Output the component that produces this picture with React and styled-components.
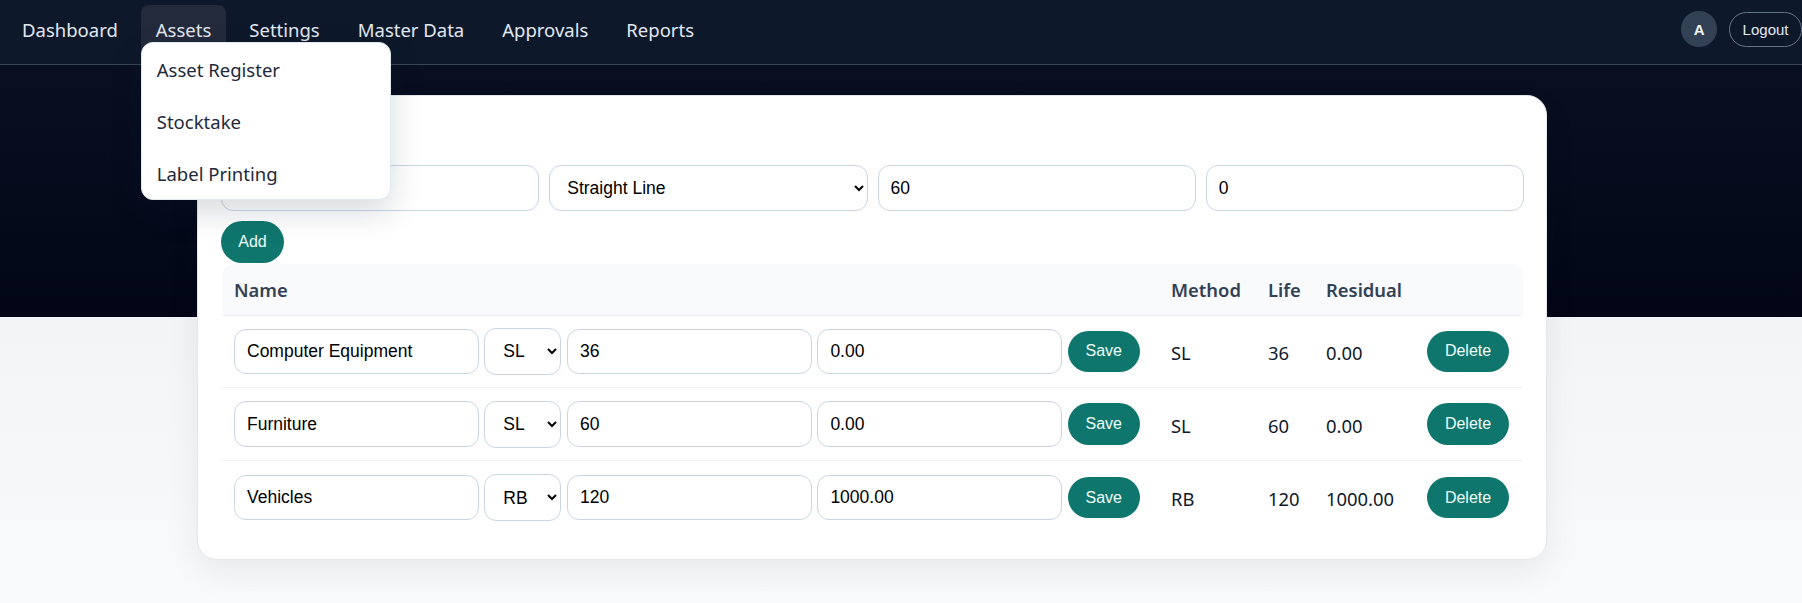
import React from "react";
import styled, { createGlobalStyle } from "styled-components";

const GlobalStyle = createGlobalStyle`
  html, body {
    margin: 0;
    padding: 0;
  }
  body {
    min-height: 603px;
    font-family: "Noto Sans", "Open Sans", sans-serif;
    color: #0f172a;
    background: linear-gradient(180deg, #0b1224 0, #020617 317px, #f3f4f6 317px, #f9fafb 603px) no-repeat;
  }
`;

const NavBar = styled.nav`
  display: flex;
  justify-content: space-between;
  align-items: flex-start;
  box-sizing: border-box;
  height: 65px;
  padding: 5px 0 0 7px;
  background: #0e182b;
  border-bottom: 1px solid #3b4558;
`;

const NavLinks = styled.div`
  display: flex;
  gap: 8px;
`;

const NavItem = styled.div`
  position: relative;
  height: 50px;
  padding: 0 15px;
  border-radius: 8px;
  font-size: 18.5px;
  line-height: 50px;
  color: #e2e8f0;
  background: ${(p) => (p.$active ? "#222a3c" : "transparent")};
`;

const Dropdown = styled.div`
  position: absolute;
  top: 37px;
  left: 0;
  z-index: 5;
  width: 250px;
  box-sizing: border-box;
  background: #fff;
  border: 1px solid #e2e8f0;
  border-radius: 12px;
  box-shadow: 0 12px 32px rgba(15, 23, 42, 0.16);
`;

const DropdownItem = styled.div`
  height: 52px;
  padding: 1px 15px 0;
  box-sizing: border-box;
  font-size: 18.5px;
  line-height: 52px;
  color: #1e293b;
`;

const UserBox = styled.div`
  display: flex;
  align-items: center;
  gap: 12px;
  padding-top: 6px;
`;

const Avatar = styled.div`
  display: flex;
  align-items: center;
  justify-content: center;
  width: 36px;
  height: 36px;
  border-radius: 50%;
  background: #334155;
  color: #f1f5f9;
  font: 700 15px "Liberation Sans", Arial, sans-serif;
`;

const LogoutButton = styled.button`
  height: 35px;
  padding: 0 12.5px;
  border: 1px solid #64748b;
  border-radius: 18px;
  background: transparent;
  color: #e2e8f0;
  font: 15px "Liberation Sans", Arial, sans-serif;
`;

const Main = styled.main`
  padding: 30px 0 0 197px;
`;

const Card = styled.section`
  box-sizing: border-box;
  width: 1350px;
  height: 465px;
  padding: 69px 22px 0 23px;
  background: #fff;
  border: 1px solid #e5e7eb;
  border-radius: 20px;
  box-shadow: 0 12px 32px rgba(15, 23, 42, 0.07);
`;

const AddForm = styled.div`
  display: grid;
  grid-template-columns: repeat(4, 1fr);
  gap: 10px;
`;

const fieldStyles = `
  box-sizing: border-box;
  background: #fff;
  border: 1px solid #cbd5e1;
  border-radius: 12px;
  color: #000;
  font: 17.5px "Liberation Sans", Arial, sans-serif;
  outline: none;
`;

const Field = styled.input`
  ${fieldStyles}
  width: ${(p) => (p.$full ? "100%" : "244.5px")};
  height: ${(p) => (p.$full ? "46px" : "45.6px")};
  padding: 0 12px;
`;

const Picker = styled.select`
  ${fieldStyles}
  width: ${(p) => (p.$full ? "100%" : "77px")};
  height: ${(p) => (p.$full ? "46px" : "46.8px")};
  padding: 0 ${(p) => (p.$full ? "13px" : "14px")};
`;

const ActionButton = styled.button`
  flex: none;
  height: 41.6px;
  padding: 0;
  width: ${(p) => p.$width}px;
  border: none;
  border-radius: 21px;
  background: #0f766e;
  color: #f0fdfa;
  font: 16px "Liberation Sans", Arial, sans-serif;
`;

const AddRow = styled.div`
  margin: 10px 0 1px;
`;

const Table = styled.table`
  width: 1301px;
  margin-left: 1px;
  border-collapse: separate;
  border-spacing: 0;
  table-layout: fixed;
`;

const HeadCell = styled.th`
  height: 52px;
  padding: 0 12px;
  box-sizing: border-box;
  background: #f8fafc;
  border-bottom: 1px solid #eef2f6;
  color: #334155;
  font-size: 18.4px;
  font-weight: 600;
  text-align: left;
  &:first-child {
    border-top-left-radius: 12px;
  }
  &:last-child {
    border-top-right-radius: 12px;
  }
`;

const Cell = styled.td`
  height: 72.8px;
  padding: 0 12px;
  box-sizing: border-box;
  border-bottom: ${(p) => (p.$last ? "none" : "1px solid #eef2f6")};
  font-size: 18.4px;
  vertical-align: middle;
`;

const EditCell = styled(Cell)`
  padding-right: 0;
`;

const DeleteCell = styled(Cell)`
  padding: 0 14px 0 0;
  text-align: right;
`;

const EditRow = styled.div`
  display: flex;
  align-items: center;
  gap: 5.8px;
`;

const CellText = styled.span`
  position: relative;
  top: 1px;
`;

const columns = [937, 97, 58, 99, 110];

const rows = [
  { name: "Computer Equipment", method: "SL", life: "36", residual: "0.00" },
  { name: "Furniture", method: "SL", life: "60", residual: "0.00" },
  { name: "Vehicles", method: "RB", life: "120", residual: "1000.00" },
];

const App = () => (
  <>
    <GlobalStyle />
    <NavBar>
      <NavLinks>
        <NavItem>Dashboard</NavItem>
        <NavItem $active>
          Assets
          <Dropdown>
            <DropdownItem>Asset Register</DropdownItem>
            <DropdownItem>Stocktake</DropdownItem>
            <DropdownItem>Label Printing</DropdownItem>
          </Dropdown>
        </NavItem>
        <NavItem>Settings</NavItem>
        <NavItem>Master Data</NavItem>
        <NavItem>Approvals</NavItem>
        <NavItem>Reports</NavItem>
      </NavLinks>
      <UserBox>
        <Avatar>A</Avatar>
        <LogoutButton>Logout</LogoutButton>
      </UserBox>
    </NavBar>
    <Main>
      <Card>
        <AddForm>
          <Field $full />
          <Picker $full defaultValue="SL">
            <option value="SL">Straight Line</option>
            <option value="RB">Reducing Balance</option>
          </Picker>
          <Field $full defaultValue="60" />
          <Field $full defaultValue="0" />
        </AddForm>
        <AddRow>
          <ActionButton $width={63}>Add</ActionButton>
        </AddRow>
        <Table>
          <colgroup>
            {columns.map((width, i) => (
              <col key={i} width={width} />
            ))}
          </colgroup>
          <thead>
            <tr>
              <HeadCell>Name</HeadCell>
              <HeadCell>Method</HeadCell>
              <HeadCell>Life</HeadCell>
              <HeadCell>Residual</HeadCell>
              <HeadCell />
            </tr>
          </thead>
          <tbody>
            {rows.map((row, i) => {
              const last = i === rows.length - 1;
              return (
                <tr key={row.name}>
                  <EditCell $last={last}>
                    <EditRow>
                      <Field defaultValue={row.name} />
                      <Picker defaultValue={row.method}>
                        <option value="SL">SL</option>
                        <option value="RB">RB</option>
                      </Picker>
                      <Field defaultValue={row.life} />
                      <Field defaultValue={row.residual} />
                      <ActionButton $width={72}>Save</ActionButton>
                    </EditRow>
                  </EditCell>
                  <Cell $last={last}><CellText>{row.method}</CellText></Cell>
                  <Cell $last={last}><CellText>{row.life}</CellText></Cell>
                  <Cell $last={last}><CellText>{row.residual}</CellText></Cell>
                  <DeleteCell $last={last}>
                    <ActionButton $width={82}>Delete</ActionButton>
                  </DeleteCell>
                </tr>
              );
            })}
          </tbody>
        </Table>
      </Card>
    </Main>
  </>
);

export default App;
